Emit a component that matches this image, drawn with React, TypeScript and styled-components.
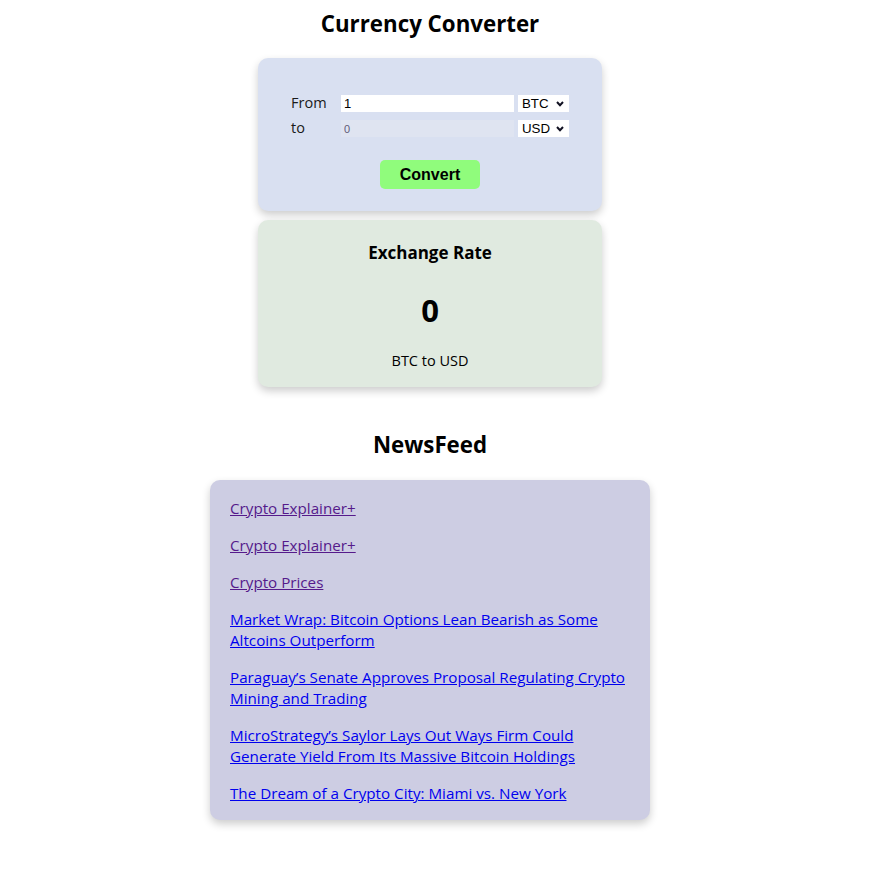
import React from "react";
import styled, { createGlobalStyle } from "styled-components";

const GlobalStyle = createGlobalStyle`
  html, body { margin: 0; padding: 0; background: #ffffff; }
  body { font-family: "Open Sans", "Noto Sans", sans-serif; color: #000; }
`;

const Page = styled.div`
  width: 860px;
  display: flex;
  flex-direction: column;
  align-items: center;
  padding-top: 8px;
  padding-bottom: 60px;
`;

const Title = styled.h1<{ $top?: number }>`
  margin: ${(p) => p.$top ?? 0}px 0 0;
  font-size: 22.3px;
  line-height: 32px;
  font-weight: 700;
  text-align: center;
`;

const Card = styled.div<{ $bg: string; $width: number; $top: number }>`
  box-sizing: border-box;
  width: ${(p) => p.$width}px;
  margin-top: ${(p) => p.$top}px;
  background: ${(p) => p.$bg};
  border-radius: 10px;
  box-shadow: 0 4px 8px rgba(0, 0, 0, 0.2);
`;

const ConverterCard = styled(Card)`
  padding: 37px 33px 22px;
  display: flex;
  flex-direction: column;
`;

const Rows = styled.div`
  display: flex;
  flex-direction: column;
  gap: 8px;
`;

const Row = styled.div`
  display: flex;
  align-items: center;
  height: 17px;
`;

const Label = styled.label`
  width: 50px;
  flex: none;
  font-size: 14.5px;
  line-height: 17px;
  color: #1a1a1a;
  position: relative;
  top: -1px;
`;

const AmountInput = styled.input`
  box-sizing: border-box;
  display: block;
  flex: none;
  width: 173px;
  height: 17px;
  border: none;
  outline: none;
  margin: 0;
  padding: 0 3px;
  font-family: "Liberation Sans", Arial, sans-serif;
  font-size: 13px;
  background: #ffffff;
  color: #000;
  &:disabled {
    background: #dfe4f1;
    color: #5f5a78;
    font-size: 11px;
  }
`;

const SelectWrap = styled.div`
  position: relative;
  flex: none;
  width: 51px;
  height: 17px;
  margin-left: 4px;
`;

const Select = styled.select`
  box-sizing: border-box;
  display: block;
  appearance: none;
  -webkit-appearance: none;
  width: 51px;
  height: 17px;
  border: none;
  border-radius: 0;
  outline: none;
  margin: 0;
  padding: 0 0 0 4px;
  line-height: 17px;
  background: #ffffff;
  font-family: "Liberation Sans", Arial, sans-serif;
  font-size: 13.3px;
  color: #000;
`;

const Chevron = styled.svg`
  position: absolute;
  right: 5px;
  top: 6px;
  width: 8px;
  height: 6px;
  pointer-events: none;
`;

const ConvertButton = styled.button`
  align-self: center;
  margin-top: 23px;
  width: 100px;
  height: 29px;
  border: none;
  border-radius: 5px;
  background: #90fc7c;
  font-family: "Liberation Sans", Arial, sans-serif;
  font-weight: 700;
  font-size: 16px;
  color: #000;
  cursor: pointer;
`;

const RateCard = styled(Card)`
  padding: 21px 0 16px;
  display: flex;
  flex-direction: column;
  align-items: center;
`;

const RateHeading = styled.div`
  font-size: 17px;
  line-height: 24px;
  font-weight: 700;
`;

const RateValue = styled.div`
  margin-top: 25px;
  font-size: 31px;
  line-height: 40px;
  font-weight: 700;
`;

const RatePair = styled.div`
  margin-top: 21px;
  font-size: 14.5px;
  line-height: 20px;
`;

const NewsCard = styled(Card)`
  padding: 1px 20px;
`;

const NewsItem = styled.p`
  margin: 16px 0;
  font-size: 15.2px;
  line-height: 21px;
  position: relative;
  top: 1px;
`;

const NewsLink = styled.a<{ $visited?: boolean }>`
  color: ${(p) => (p.$visited ? "#551a8b" : "#0000ee")};
  text-decoration: underline;
`;

const ChevronIcon = () => (
  <Chevron viewBox="0 0 8 6">
    <polyline points="1,1 4,4.2 7,1" fill="none" stroke="#111122" strokeWidth="2" />
  </Chevron>
);

const news = [
  { title: "Crypto Explainer+", visited: true },
  { title: "Crypto Explainer+", visited: true },
  { title: "Crypto Prices", visited: true },
  { title: "Market Wrap: Bitcoin Options Lean Bearish as Some Altcoins Outperform" },
  { title: "Paraguay’s Senate Approves Proposal Regulating Crypto Mining and Trading" },
  { title: "MicroStrategy’s Saylor Lays Out Ways Firm Could Generate Yield From Its Massive Bitcoin Holdings" },
  { title: "The Dream of a Crypto City: Miami vs. New York" },
];

export default function App() {
  return (
    <>
      <GlobalStyle />
      <Page>
        <Title>Currency Converter</Title>
        <ConverterCard $bg="#d9e0f1" $width={344} $top={18}>
          <Rows>
            <Row>
              <Label>From</Label>
              <AmountInput defaultValue="1" />
              <SelectWrap>
                <Select defaultValue="BTC">
                  <option>BTC</option>
                  <option>ETH</option>
                  <option>USD</option>
                </Select>
                <ChevronIcon />
              </SelectWrap>
            </Row>
            <Row>
              <Label>to</Label>
              <AmountInput value="0" disabled readOnly />
              <SelectWrap>
                <Select defaultValue="USD">
                  <option>USD</option>
                  <option>EUR</option>
                  <option>BTC</option>
                </Select>
                <ChevronIcon />
              </SelectWrap>
            </Row>
          </Rows>
          <ConvertButton>Convert</ConvertButton>
        </ConverterCard>
        <RateCard $bg="#e0eae0" $width={344} $top={9}>
          <RateHeading>Exchange Rate</RateHeading>
          <RateValue>0</RateValue>
          <RatePair>BTC to USD</RatePair>
        </RateCard>
        <Title $top={42}>NewsFeed</Title>
        <NewsCard $bg="#cdcde3" $width={440} $top={19}>
          {news.map((n, i) => (
            <NewsItem key={i}>
              <NewsLink href="#" $visited={n.visited}>
                {n.title}
              </NewsLink>
            </NewsItem>
          ))}
        </NewsCard>
      </Page>
    </>
  );
}
